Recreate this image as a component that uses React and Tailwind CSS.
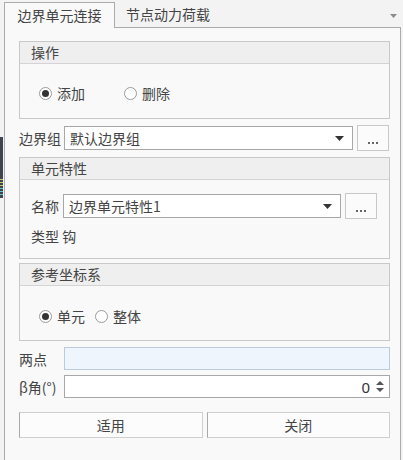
import React from "react";

const FONT = { fontFamily: '"Noto Sans CJK SC", "Microsoft YaHei", "Noto Sans", sans-serif' };

function Radio({ checked, label, className = "" }) {
  return (
    <div className={"flex items-center h-[16px] " + className}>
      <span className="w-[13px] h-[13px] rounded-full border border-[#9a9a9a] bg-white flex items-center justify-center shrink-0">
        {checked && <span className="w-[7px] h-[7px] rounded-full bg-[#333333]" />}
      </span>
      <span className="ml-[5px] text-[14px] leading-[16px] text-[#444444]">{label}</span>
    </div>
  );
}

function Group({ title, height, children }) {
  return (
    <div className="w-[371px] border border-[#c8c8c8] flex flex-col" style={{ height }}>
      <div className="h-[22px] bg-[#efefef] border-b border-[#d4d4d4] flex items-center pl-[11px] pb-[2px] text-[14px] leading-[20px] text-[#444444] shrink-0">
        {title}
      </div>
      <div className="flex-1 bg-[#f9f9f9]">{children}</div>
    </div>
  );
}

function Arrow() {
  return (
    <svg width="9" height="5" viewBox="0 0 9 5" className="shrink-0">
      <path d="M0 0 L9 0 L4.5 5 Z" fill="#333" />
    </svg>
  );
}

function Combo({ value, width }) {
  return (
    <div
      className="h-[24px] border border-[#a8a8a8] bg-white flex items-center pl-[5px] pr-[8px] text-[14px] leading-[20px] text-[#444444]"
      style={{ width }}
    >
      <span className="flex-1">{value}</span>
      <Arrow />
    </div>
  );
}

function DotsBtn() {
  return (
    <div className="w-[32px] h-[26px] border border-[#c8c8c8] bg-[#fbfbfb] flex items-end justify-center pb-[6px]">
      <span className="flex gap-[2px]">
        <span className="w-[2px] h-[2px] bg-[#666]" />
        <span className="w-[2px] h-[2px] bg-[#666]" />
        <span className="w-[2px] h-[2px] bg-[#666]" />
      </span>
    </div>
  );
}

const LABEL = "text-[14px] leading-[20px] text-[#444444]";

export default function App() {
  return (
    <div className="relative w-[403px] h-[460px] bg-[#f3f3f3] overflow-hidden flex flex-col" style={FONT}>
      {/* tab strip */}
      <div className="h-[27px] flex items-end pl-[4px] shrink-0 relative z-10">
        <div className={"w-[111px] h-[26px] border border-b-0 border-[#ababab] bg-[#f9f9f9] flex items-center justify-center mb-[-1px] pb-[1px] " + LABEL}>
          边界单元连接
        </div>
        <div className={"h-[26px] flex items-center pl-[11px] pb-[1px] " + LABEL}>
          节点动力荷载
        </div>
        <div className="ml-auto mr-[6px] h-[26px] flex items-center pt-[4px]">
          <svg width="7" height="4" viewBox="0 0 7 4">
            <path d="M0 0 L7 0 L3.5 4 Z" fill="#8c8c8c" />
          </svg>
        </div>
      </div>

      {/* pane */}
      <div className="ml-[4px] w-[397px] flex-1 border border-b-0 border-[#ababab] bg-[#f9f9f9] pt-[13px] pl-[14px] flex flex-col">
        <Group title="操作" height="78px">
          <div className="flex pt-[21px] pl-[19px]">
            <Radio checked label="添加" />
            <Radio label="删除" className="ml-[39px]" />
          </div>
        </Group>

        <div className="mt-[6px] h-[26px] flex items-center w-[371px]">
          <span className={"w-[45px] " + LABEL}>边界组</span>
          <Combo value="默认边界组" width="289px" />
          <div className="ml-[4px]">
            <DotsBtn />
          </div>
        </div>

        <div className="mt-[6px]">
          <Group title="单元特性" height="102px">
            <div className="pt-[13px] pl-[11px]">
              <div className="h-[26px] flex items-center">
                <span className={"w-[32px] " + LABEL}>名称</span>
                <Combo value="边界单元特性1" width="278px" />
                <div className="ml-[4px]">
                  <DotsBtn />
                </div>
              </div>
              <div className={"mt-[7px] h-[20px] " + LABEL}>类型 钩</div>
            </div>
          </Group>
        </div>

        <div className="mt-[4px]">
          <Group title="参考坐标系" height="78px">
            <div className="flex pt-[22px] pl-[19px]">
              <Radio checked label="单元" />
              <Radio label="整体" className="ml-[10px]" />
            </div>
          </Group>
        </div>

        <div className="mt-[6px] h-[23px] flex items-center w-[371px]">
          <span className={"w-[45px] " + LABEL}>两点</span>
          <div className="flex-1 h-[23px] border border-[#bccbdb] bg-[#eef5fd]" />
        </div>

        <div className="mt-[5px] h-[23px] flex items-center w-[371px]">
          <span className={"w-[45px] " + LABEL}>β角(°)</span>
          <div className="flex-1 h-[23px] border border-[#a8a8a8] bg-white flex items-center justify-end pr-[5px]">
            <span className="text-[15px] leading-[20px] text-[#333333] mr-[6px]" style={{ fontFamily: '"Noto Sans", sans-serif' }}>0</span>
            <svg width="8" height="13" viewBox="0 0 8 13">
              <path d="M0 5 L8 5 L4 1 Z" fill="#555" />
              <path d="M0 8 L8 8 L4 12 Z" fill="#555" />
            </svg>
          </div>
        </div>

        <div className="mt-[14px] flex gap-[4px] w-[371px]">
          <div className={"flex-1 h-[26px] border border-[#cfcfcf] border-l-[#a9a9a9] bg-[#fcfcfc] flex items-center justify-center " + LABEL}>
            适用
          </div>
          <div className={"flex-1 h-[26px] border border-[#cfcfcf] border-l-[#a9a9a9] bg-[#fcfcfc] flex items-center justify-center " + LABEL}>
            关闭
          </div>
        </div>
      </div>

      {/* background window sliver on the left */}
      <div className="absolute left-0 top-[137px] w-[3px] h-[61px] bg-[#3f4450] flex flex-col justify-end gap-[2px] pb-[3px]">
        <span className="h-[1px] bg-[#c8c860]" />
        <span className="h-[1px] bg-[#c8c860]" />
        <span className="h-[1px] bg-[#c8c860]" />
        <span className="h-[1px] bg-[#60c8c8]" />
        <span className="h-[1px] bg-[#60c8c8]" />
        <span className="h-[1px] bg-[#60c8c8]" />
      </div>
    </div>
  );
}
